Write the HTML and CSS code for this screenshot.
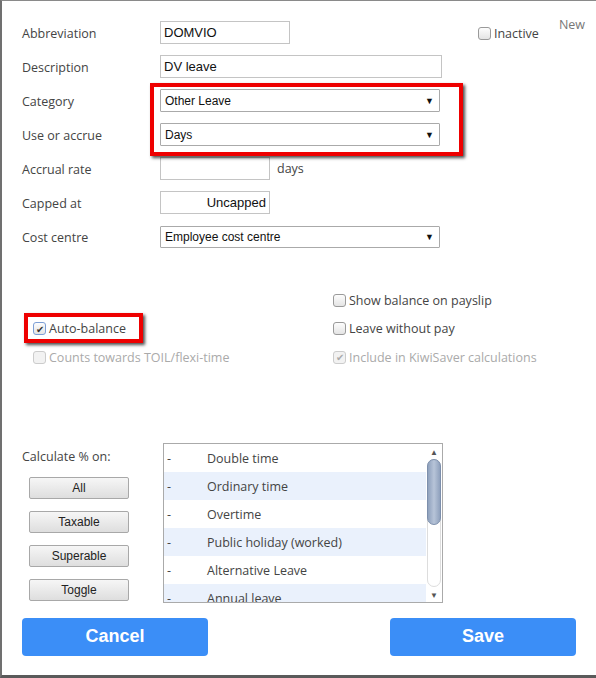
FILE: index.html
```html
<!DOCTYPE html>
<html>
<head>
<meta charset="utf-8">
<link rel="stylesheet" href="styles.css">
</head>
<body>
<div class="frame">
  <div class="edge-mark"></div>
  <div class="form">
    <div class="field-grid">
      <div class="label">Abbreviation</div>
      <div class="cell top-cell">
        <div class="input w130">DOMVIO</div>
        <label class="chk inactive"><span class="box"></span>Inactive</label>
        <span class="status">New</span>
      </div>

      <div class="label">Description</div>
      <div class="cell"><div class="input w282">DV leave</div></div>

      <div class="label">Category</div>
      <div class="cell"><div class="select w280"><span>Other Leave</span><span class="arrow">&#9660;</span></div></div>

      <div class="label">Use or accrue</div>
      <div class="cell"><div class="select w280"><span>Days</span><span class="arrow">&#9660;</span></div></div>

      <div class="label">Accrual rate</div>
      <div class="cell"><div class="input w110"></div><span class="unit">days</span></div>

      <div class="label">Capped at</div>
      <div class="cell"><div class="input w110 right">Uncapped</div></div>

      <div class="label">Cost centre</div>
      <div class="cell"><div class="select w280 short"><span>Employee cost centre</span><span class="arrow">&#9660;</span></div></div>
    </div>

    <div class="checks">
      <div></div>
      <label class="chk"><span class="box"></span>Show balance on payslip</label>
      <label class="chk"><span class="box checked">&#10004;</span>Auto-balance</label>
      <label class="chk"><span class="box"></span>Leave without pay</label>
      <label class="chk disabled"><span class="box"></span>Counts towards TOIL/flexi-time</label>
      <label class="chk disabled"><span class="box checked">&#10004;</span>Include in KiwiSaver calculations</label>
    </div>

    <div class="calc">
      <div class="calc-side">
        <div class="calc-label">Calculate % on:</div>
        <div class="btn-col">
          <div class="btn">All</div>
          <div class="btn">Taxable</div>
          <div class="btn">Superable</div>
          <div class="btn">Toggle</div>
        </div>
      </div>
      <div class="listbox">
        <div class="rows">
          <div class="row"><span class="dash">-</span><span>Double time</span></div>
          <div class="row alt"><span class="dash">-</span><span>Ordinary time</span></div>
          <div class="row"><span class="dash">-</span><span>Overtime</span></div>
          <div class="row alt"><span class="dash">-</span><span>Public holiday (worked)</span></div>
          <div class="row"><span class="dash">-</span><span>Alternative Leave</span></div>
          <div class="row alt"><span class="dash">-</span><span>Annual leave</span></div>
        </div>
        <div class="scrollbar">
          <div class="sb-arrow">&#9650;</div>
          <div class="sb-track"><div class="sb-thumb"></div></div>
          <div class="sb-arrow">&#9660;</div>
        </div>
      </div>
    </div>

    <div class="actions">
      <div class="action">Cancel</div>
      <div class="action">Save</div>
    </div>
  </div>

  <div class="hl hl-select"></div>
  <div class="hl hl-auto"></div>
</div>
</body>
</html>
```
FILE: styles.css
```css
html, body {
  margin: 0;
  padding: 0;
  background: #fff;
}
.frame {
  position: relative;
  width: 596px;
  height: 678px;
  box-sizing: border-box;
  border-left: 2px solid #707070;
  border-top: 1px solid #8a8a8a;
  border-bottom: 3px solid #5a5a5a;
  background: #fff;
  overflow: hidden;
  font-family: "Open Sans", "Noto Sans", sans-serif;
  font-size: 12.5px;
  color: #444;
}
.edge-mark {
  position: absolute;
  left: -2px;
  top: 13px;
  width: 2px;
  height: 28px;
  background: #1f3a60;
}
.form {
  padding: 20px 11px 0 20px;
}
.field-grid {
  display: grid;
  grid-template-columns: 138px 1fr;
  grid-auto-rows: 23px;
  row-gap: 11px;
}
.label {
  display: flex;
  align-items: center;
  padding-top: 1px;
}
.cell {
  display: flex;
  align-items: center;
}
.top-cell {
  align-items: flex-start;
}
.input, .select {
  box-sizing: border-box;
  height: 23px;
  border: 1px solid #c4c4c4;
  font-family: "Liberation Sans", Arial, sans-serif;
  font-size: 13px;
  color: #111;
  display: flex;
  align-items: center;
  padding: 0 3px;
  background: #fff;
}
.w130 { width: 130px; }
.w282 { width: 282px; }
.w280 { width: 280px; }
.w110 { width: 110px; }
.right { justify-content: flex-end; }
.select {
  border-color: #aaa;
  border-radius: 1px;
  justify-content: space-between;
  padding: 0 5px 0 4px;
  font-size: 12px;
}
.select.short { height: 22px; }
.arrow {
  font-size: 9px;
  color: #111;
}
.unit {
  margin-left: 7px;
  color: #444;
}
.chk {
  display: flex;
  align-items: center;
  gap: 3px;
  color: #444;
  white-space: nowrap;
}
.inactive {
  margin-left: auto;
  margin-top: 4px;
  padding-right: 2px;
}
.status {
  margin-left: 18px;
  margin-top: -5px;
  color: #777;
}
.box {
  box-sizing: border-box;
  width: 13px;
  height: 13px;
  border: 1px solid #9a9a9a;
  border-radius: 3px;
  background: linear-gradient(#fdfdfd, #e4e4e4);
  display: inline-flex;
  align-items: center;
  justify-content: center;
  font-size: 10px;
  line-height: 1;
  color: #333;
}
.box.checked {
  border-color: #7d9fd6;
}
.chk.disabled {
  color: #aaa;
}
.chk.disabled .box {
  border-color: #ccc;
  background: #f2f2f2;
  color: #aaa;
}
.checks {
  display: grid;
  grid-template-columns: 300px 1fr;
  grid-auto-rows: 28.5px;
  margin-top: 38px;
  padding-left: 11px;
}
.calc {
  display: flex;
  margin-top: 71px;
}
.calc-side {
  width: 141px;
}
.calc-label {
  margin-top: 5px;
  height: 18px;
  line-height: 18px;
}
.btn-col {
  display: flex;
  flex-direction: column;
  gap: 12px;
  margin-top: 11px;
  padding-left: 7px;
}
.btn {
  box-sizing: border-box;
  width: 100px;
  height: 22px;
  border: 1px solid #a8a8a8;
  border-radius: 2px;
  background: linear-gradient(#f6f6f6, #dedede);
  font-family: "Liberation Sans", Arial, sans-serif;
  font-size: 12px;
  color: #222;
  display: flex;
  align-items: center;
  justify-content: center;
}
.listbox {
  box-sizing: border-box;
  width: 280px;
  height: 160px;
  border: 1px solid #aaa;
  display: flex;
  overflow: hidden;
}
.rows {
  flex: 1;
  overflow: hidden;
}
.row {
  box-sizing: border-box;
  height: 28px;
  padding-top: 2px;
  display: flex;
  align-items: center;
  color: #444;
  font-size: 12.5px;
}
.row.alt {
  background: #eaf1fc;
}
.dash {
  width: 43px;
  padding-left: 3px;
  box-sizing: border-box;
}
.scrollbar {
  width: 16px;
  display: flex;
  flex-direction: column;
  background: #fff;
}
.sb-arrow {
  height: 15px;
  font-size: 8px;
  color: #555;
  display: flex;
  align-items: center;
  justify-content: center;
}
.sb-track {
  flex: 1;
  margin: 0 1px;
  border: 1px solid #ddd;
  border-radius: 7px;
  position: relative;
}
.sb-thumb {
  height: 64px;
  margin: -1px -1px 0;
  border: 1px solid #7d8fac;
  border-radius: 7px;
  background: linear-gradient(90deg, #8fa1bd, #b7c4d8 50%, #8fa1bd);
}
.actions {
  display: flex;
  justify-content: space-between;
  margin-top: 15px;
  padding-right: 9px;
}
.action {
  width: 186px;
  height: 38px;
  border-radius: 4px;
  background: #3b8ef7;
  color: #fff;
  font-family: "Liberation Sans", Arial, sans-serif;
  font-weight: bold;
  font-size: 18px;
  display: flex;
  align-items: center;
  justify-content: center;
}
.hl {
  position: absolute;
  border: 4px solid #ee0000;
  box-shadow: 2px 2px 3px rgba(0,0,0,0.7);
  box-sizing: border-box;
  pointer-events: none;
}
.hl-select {
  left: 148px;
  top: 82px;
  width: 313px;
  height: 73px;
}
.hl-auto {
  left: 22px;
  top: 312px;
  width: 119px;
  height: 30px;
}
```
